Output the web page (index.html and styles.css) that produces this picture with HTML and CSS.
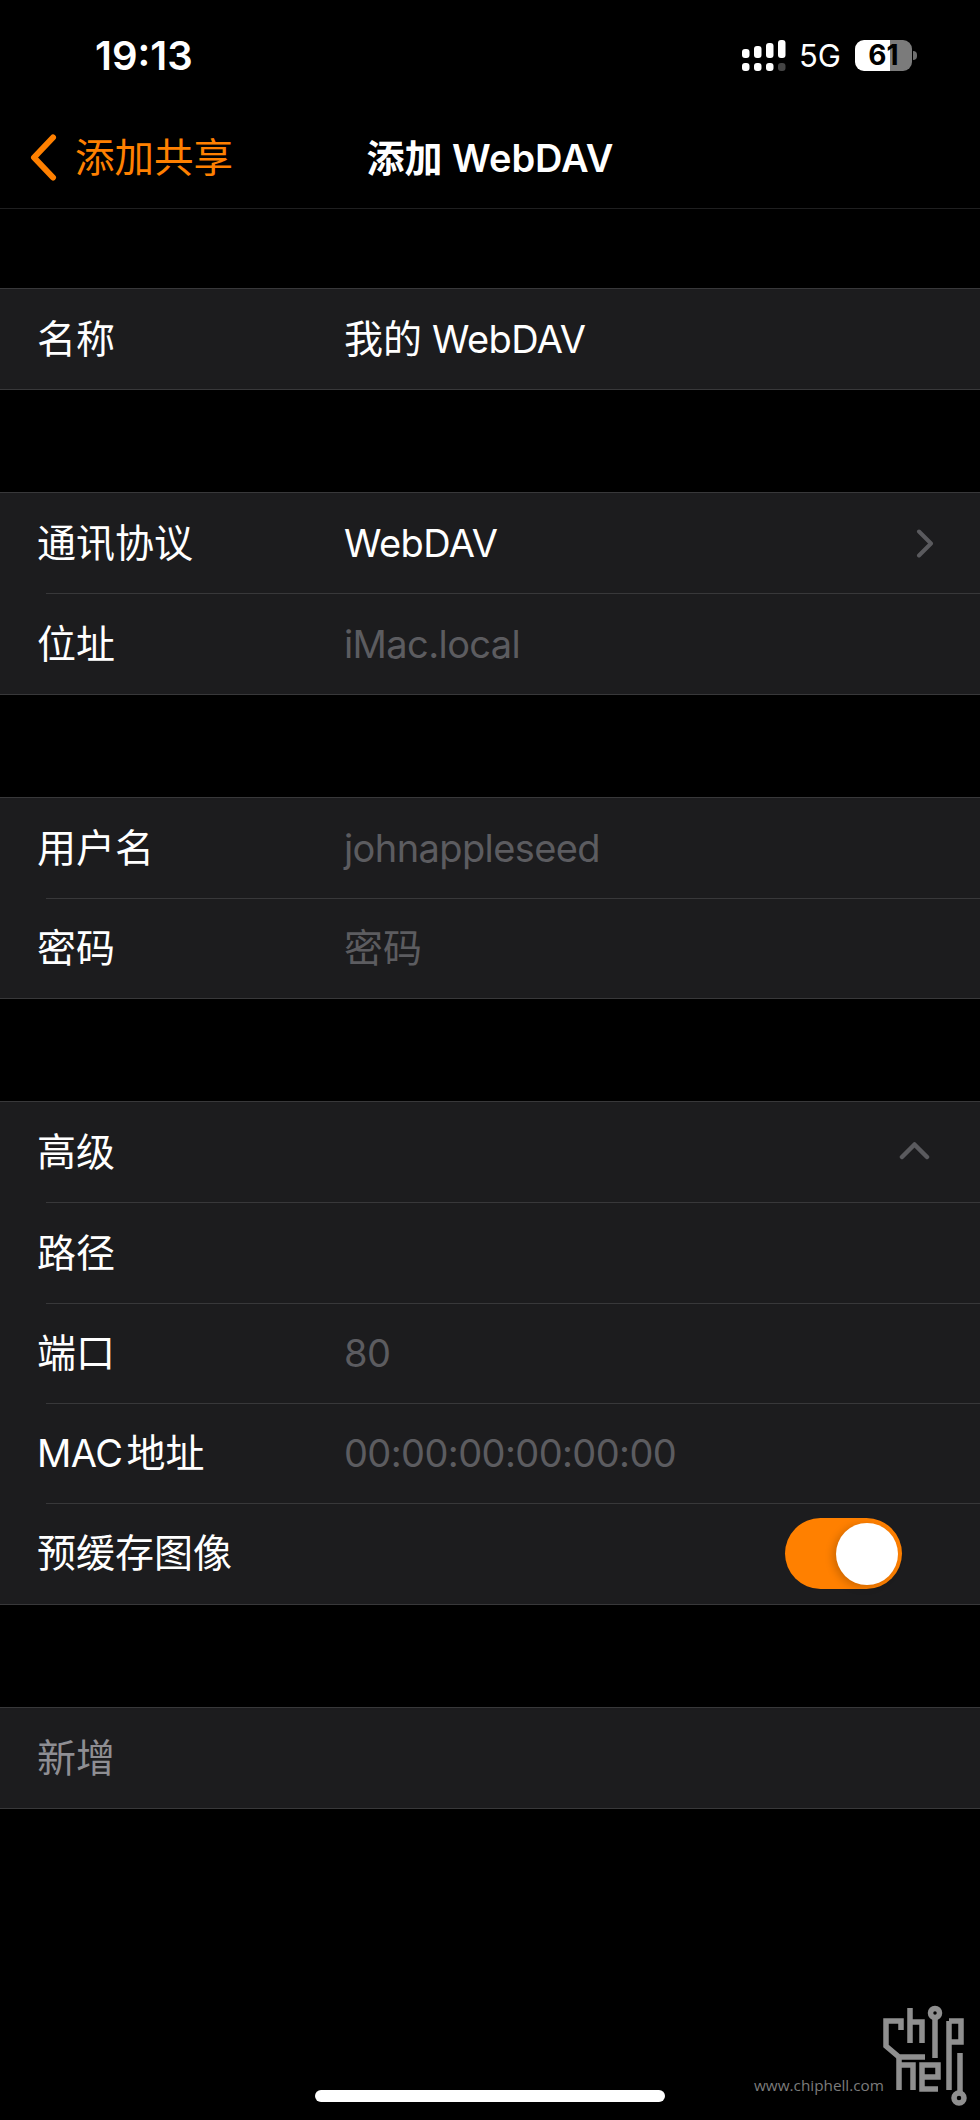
FILE: index.html
```html
<!DOCTYPE html>
<html lang="zh-CN">
<head>
    <meta charset="UTF-8">
    <meta name="viewport" content="width=device-width, initial-scale=1.0">
    <title>添加 WebDAV</title>
    <link rel="stylesheet" href="styles.css">
</head>
<body>
    <div class="status-bar">
        <div class="status-time">19:13</div>
        <div class="status-icons">
            <svg class="signal" width="44" height="31" viewBox="0 0 44 31">
                <g fill="#fff">
                    <rect x="0" y="9" width="7.500" height="9" rx="3"/>
                    <rect x="12" y="6" width="7.500" height="12" rx="3"/>
                    <rect x="24" y="3" width="7.500" height="15" rx="3"/>
                    <rect x="36" y="0" width="7.500" height="18" rx="3"/>
                    <rect x="0" y="23" width="7.500" height="8" rx="3"/>
                    <rect x="12" y="23" width="7.500" height="8" rx="3"/>
                    <rect x="24" y="23" width="7.500" height="8" rx="3"/>
                    <rect x="36" y="23" width="7.500" height="8" rx="3" fill="#444"/>
                </g>
            </svg>
            <span class="network">5G</span>
            <div class="battery"><span>61</span></div>
            <div class="battery-nub"></div>
        </div>
    </div>

    <div class="nav-bar">
        <div class="nav-back">
            <svg class="back-icon" width="30" height="47" viewBox="0 0 30 47">
                <path d="M25 3.500 L6 23.500 L25 43.500" fill="none" stroke="#ff8000" stroke-width="6" stroke-linecap="round" stroke-linejoin="round"/>
            </svg>
            <span>添加共享</span>
        </div>
        <div class="nav-title">添加 WebDAV</div>
    </div>

    <div class="content">
        <div class="group">
            <div class="row"><span class="label">名称</span><span class="value"><span class="cjk">我的</span> WebDAV</span></div>
        </div>

        <div class="group">
            <div class="row">
                <span class="label">通讯协议</span><span class="value">WebDAV</span>
                <svg class="chevron-right" width="18" height="29" viewBox="0 0 18 29">
                    <path d="M3 2.500 L15 14.500 L3 26.500" fill="none" stroke="#5a5a5e" stroke-width="4" stroke-linecap="round" stroke-linejoin="round"/>
                </svg>
            </div>
            <div class="row"><span class="label">位址</span><span class="value hint">iMac.local</span></div>
        </div>

        <div class="group">
            <div class="row"><span class="label">用户名</span><span class="value hint">johnappleseed</span></div>
            <div class="row"><span class="label">密码</span><span class="value hint"><span class="cjk">密码</span></span></div>
        </div>

        <div class="group">
            <div class="row">
                <span class="label">高级</span>
                <svg class="chevron-up" width="31" height="19" viewBox="0 0 31 19">
                    <path d="M3 16 L15.500 3.500 L28 16" fill="none" stroke="#5a5a5e" stroke-width="4.500" stroke-linecap="round" stroke-linejoin="round"/>
                </svg>
            </div>
            <div class="row"><span class="label">路径</span></div>
            <div class="row"><span class="label">端口</span><span class="value hint">80</span></div>
            <div class="row"><span class="label"><span class="label-latin">MAC</span>地址</span><span class="value hint">00:00:00:00:00:00</span></div>
            <div class="row">
                <span class="label">预缓存图像</span>
                <div class="toggle"><div class="toggle-knob"></div></div>
            </div>
        </div>

        <div class="group">
            <div class="row"><span class="label muted">新增</span></div>
        </div>
    </div>

    <div class="home-indicator"></div>

    <!-- watermark -->
    <div class="watermark">
        <span class="watermark-url">www.chiphell.com</span>
        <svg class="watermark-logo" width="105" height="110" viewBox="0 0 105 110">
            <g fill="none" stroke="#8f8f8f" stroke-width="5.500">
                <path d="M26 30 V21 H11 V46 L24 57 H50"/>
                <path d="M35 8 V43 M35 22 H47 V43"/>
                <path d="M60 18 V58"/>
                <circle cx="60" cy="13" r="4.500"/>
                <path d="M74 21 H86 V42 H74 M74 21 V90"/>
                <path d="M24 57 V90 M24 65 H38 V90"/>
                <path d="M63 89 H47 V65 H63 V77 H47"/>
                <path d="M85 53 V93"/>
                <circle cx="84" cy="98" r="5"/>
            </g>
        </svg>
    </div>
</body>
</html>
```

FILE: styles.css
```css
body {
    margin: 0;
    width: 980px;
    height: 2120px;
    background-color: #000;
    color: #fff;
    font-family: Inter, "Noto Sans CJK SC", sans-serif;
    position: relative;
    overflow: hidden;
}

.status-bar {
    height: 110px;
    display: flex;
    justify-content: space-between;
    align-items: center;
    padding: 0 63px 0 95px;
    box-sizing: border-box;
}

.status-time {
    font-size: 40px;
    font-weight: 600;
}

.status-icons {
    display: flex;
    align-items: center;
}

.network {
    font-size: 31px;
    margin-left: 13px;
    margin-right: 14px;
}

.battery {
    width: 57px;
    height: 31px;
    border-radius: 9px;
    background: linear-gradient(to right, #fff 61%, #7b7b7b 61%);
    color: #000;
    font-size: 28px;
    font-weight: 700;
    line-height: 31px;
    text-align: center;
}

.battery-nub {
    width: 4px;
    height: 9px;
    margin-left: 1px;
    background-color: #6f6f6f;
    border-radius: 0 4px 4px 0;
}

.nav-bar {
    height: 98px;
    border-bottom: 1px solid #1f1f20;
    display: flex;
    align-items: center;
    justify-content: center;
    position: relative;
    line-height: 46px;
}

.nav-back {
    position: absolute;
    left: 28px;
    top: 0;
    bottom: 2px;
    display: flex;
    align-items: center;
    gap: 17px;
    color: #ff8000;
    font-size: 39.500px;
}

.back-icon {
    margin-bottom: 2px;
}

.nav-title {
    font-size: 38px;
    font-weight: 600;
    margin-bottom: 2px;
}

.content {
    display: flex;
    flex-direction: column;
    gap: 101.900px;
    padding-top: 79px;
}

.group {
    background-color: #1c1c1e;
    border-top: 1px solid #38383a;
    border-bottom: 1px solid #38383a;
}

.row {
    height: 100.300px;
    display: flex;
    align-items: center;
    padding-left: 37px;
    font-size: 38px;
    line-height: 46px;
    position: relative;
}

/* inset separator between rows */
.row + .row::before {
    content: "";
    position: absolute;
    top: 0;
    left: 46px;
    right: 0;
    height: 1px;
    background-color: #38383a;
}

.label {
    width: 307px;
    flex-shrink: 0;
    font-size: 39px;
}

.label-latin {
    font-size: 38px;
    letter-spacing: -0.500px;
    margin-right: 4px;
}

.value {
    color: #fff;
    letter-spacing: -0.600px;
}

.cjk {
    font-size: 39px;
    letter-spacing: 0;
}

.hint {
    color: #5c5c60;
}

.muted {
    color: #8e8e93;
}

.chevron-right {
    position: absolute;
    right: 46px;
    top: 36px;
}

.chevron-up {
    position: absolute;
    right: 50px;
    top: 39px;
}

.toggle {
    position: absolute;
    left: 785px;
    top: 15px;
    width: 117px;
    height: 71px;
    border-radius: 36px;
    background-color: #ff8000;
}

.toggle-knob {
    position: absolute;
    right: 4px;
    top: 5px;
    width: 62px;
    height: 62px;
    border-radius: 50%;
    background-color: #fff;
    box-shadow: -3px 2px 8px rgba(0, 0, 0, 0.2);
}

.home-indicator {
    position: absolute;
    left: 315px;
    top: 2090px;
    width: 350px;
    height: 12px;
    border-radius: 6px;
    background-color: #fff;
}

.watermark {
    position: absolute;
    left: 754px;
    top: 2000px;
    display: flex;
    align-items: flex-end;
}

.watermark-url {
    width: 121px;
    font-family: "Open Sans", sans-serif;
    font-size: 15.300px;
    line-height: 20px;
    color: #7c7c7c;
    white-space: nowrap;
    margin-bottom: 15px;
}

.watermark-logo {
    display: block;
}
```
